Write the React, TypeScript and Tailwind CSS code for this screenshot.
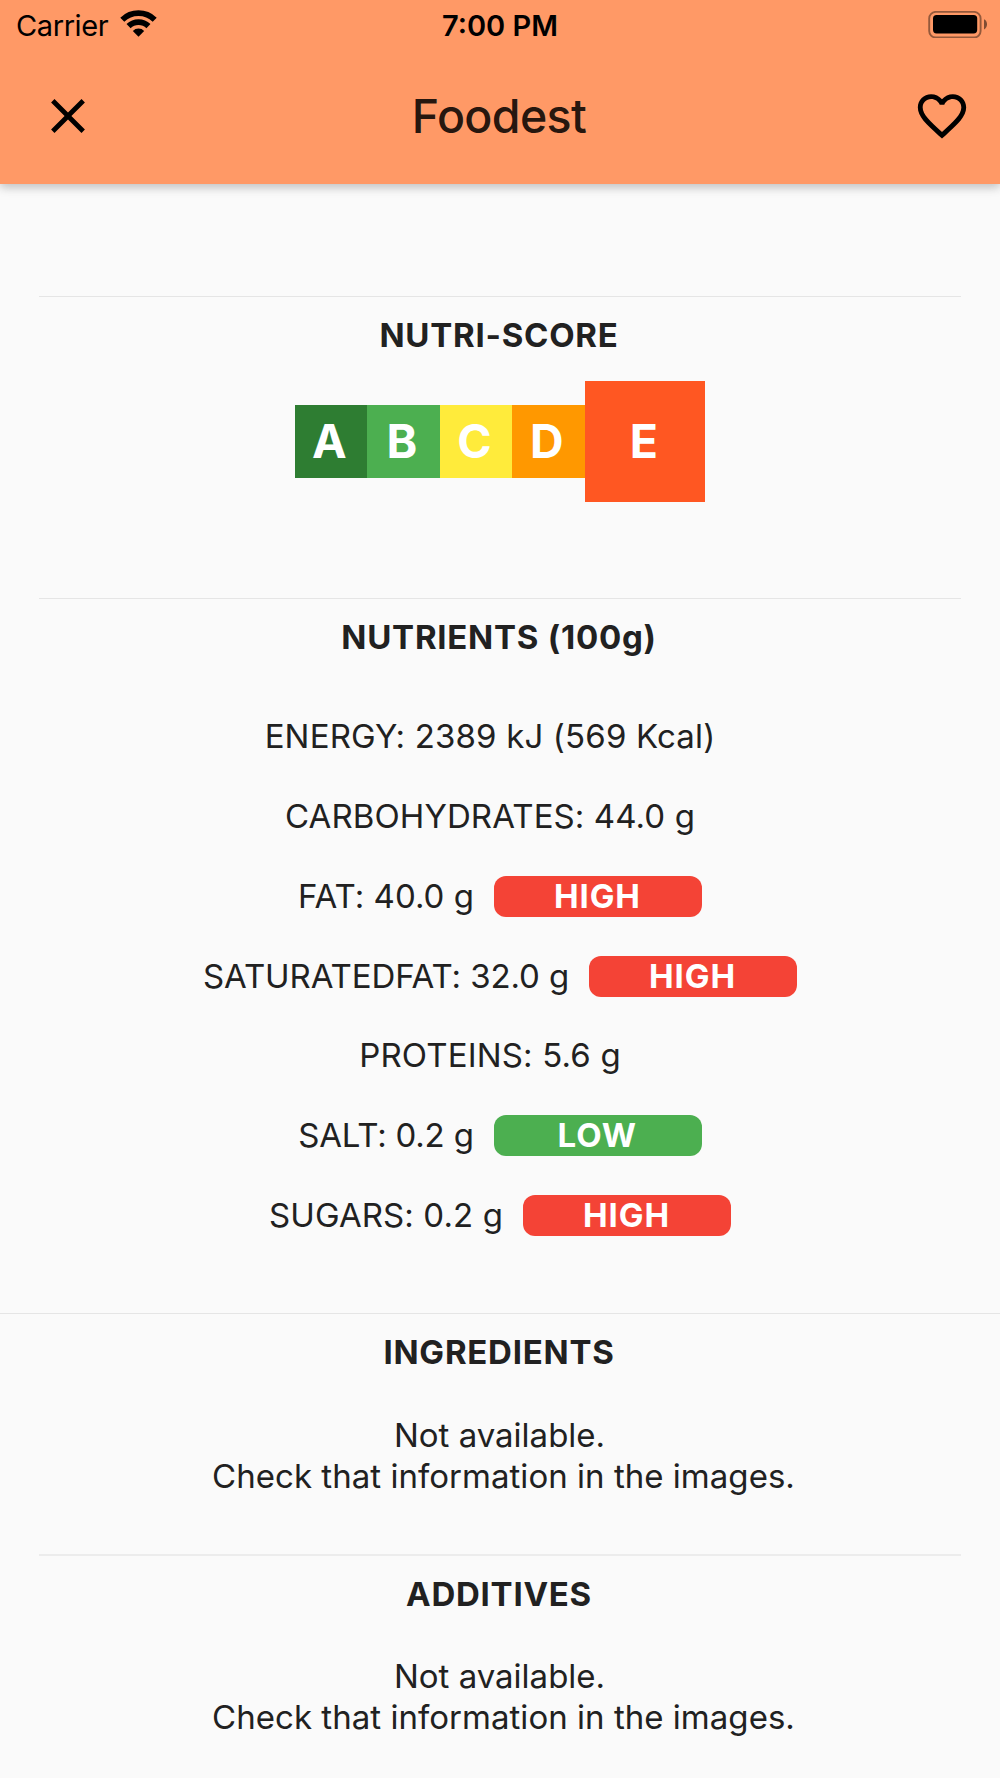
import type { ReactNode } from 'react';
import { MdClose, MdFavoriteBorder } from 'react-icons/md';

const grades = [
  { letter: 'A', color: 'bg-[#2e7d32]' },
  { letter: 'B', color: 'bg-[#4caf50]' },
  { letter: 'C', color: 'bg-[#ffeb3b]' },
  { letter: 'D', color: 'bg-[#ff9800]' },
];

type Level = 'HIGH' | 'LOW';

const nutrients: { text: string; tracking: string; level?: Level }[] = [
  { text: 'ENERGY: 2389 kJ (569 Kcal)', tracking: 'tracking-[0.16px]' },
  { text: 'CARBOHYDRATES: 44.0 g', tracking: 'tracking-[0.1px]' },
  { text: 'FAT: 40.0 g', tracking: 'tracking-[0.02px]', level: 'HIGH' },
  { text: 'SATURATEDFAT: 32.0 g', tracking: 'tracking-[-0.1px]', level: 'HIGH' },
  { text: 'PROTEINS: 5.6 g', tracking: 'tracking-[0.16px]' },
  { text: 'SALT: 0.2 g', tracking: 'tracking-[-0.2px]', level: 'LOW' },
  { text: 'SUGARS: 0.2 g', tracking: 'tracking-[0.1px]', level: 'HIGH' },
];

function WifiIcon() {
  return (
    <svg className="h-[27px] w-[37px]" viewBox="0 0 37 27" fill="none" stroke="#000">
      <path d="M2.3 9.75a23.3 23.3 0 0 1 32.4 0" strokeWidth="5.8" />
      <path d="M8.55 16.2a14.3 14.3 0 0 1 19.9 0" strokeWidth="5.8" />
      <path d="M18.5 26.7l-5.7-5.7a8 8 0 0 1 11.4 0z" fill="#000" stroke="none" />
    </svg>
  );
}

function BatteryIcon() {
  return (
    <svg className="h-[27px] w-[59px]" viewBox="0 0 59 27">
      <rect x="1.2" y="0.9" width="51.4" height="25.6" rx="6.5" fill="none" stroke="#000" strokeOpacity="0.42" strokeWidth="1.9" />
      <rect x="5" y="4" width="44.2" height="18.4" rx="3.6" fill="#000" />
      <path d="M56 8.2c4 1.6 4 8.6 0 10.2z" fill="#000" fillOpacity="0.5" />
    </svg>
  );
}

function Header() {
  return (
    <header className="relative h-[184px] bg-[#ff9966] shadow-[0_4px_8px_rgba(0,0,0,0.13),0_2px_12px_rgba(0,0,0,0.13)]">
      <div className="grid h-[50px] grid-cols-3 px-[13px] text-[29px] leading-[51px] text-black">
        <div className="flex gap-[12px] pl-[3px]">
          <span className="tracking-[-0.4px]">Carrier</span>
          <span className="pt-[10px]">
            <WifiIcon />
          </span>
        </div>
        <span className="text-center font-semibold">7:00 PM</span>
        <div className="flex justify-end pt-[11px]">
          <BatteryIcon />
        </div>
      </div>
      <div className="grid h-[134px] grid-cols-[1fr_auto_1fr] items-center pb-[2px] pl-[39px] pr-[29px]">
        <MdClose className="size-[58px] text-black" />
        <h1 className="pr-[12px] text-[46.5px] font-medium tracking-[-0.65px] text-black/87">Foodest</h1>
        <MdFavoriteBorder className="size-[58px] justify-self-end text-black" />
      </div>
    </header>
  );
}

function Section({ title, children, className }: { title: string; children: ReactNode; className: string }) {
  return (
    <section className={`pt-[18px] ${className}`}>
      <h2 className="pr-[2px] text-center font-bold tracking-[0.75px]">{title}</h2>
      {children}
    </section>
  );
}

function Unavailable({ className }: { className: string }) {
  return (
    <div className={`text-center ${className}`}>
      <p className="pr-px">Not available.</p>
      <p className="pl-[7px] tracking-[0.03px]">Check that information in the images.</p>
    </div>
  );
}

export default function App() {
  return (
    <div className="h-[1778px] w-[1000px] overflow-hidden bg-[#fafafa] font-['Inter',sans-serif] text-[33px] leading-[41px] text-[#212121]">
      <Header />
      <main className="pt-[112px]">
        <Section title="NUTRI-SCORE" className="mx-[39px] h-[302px] border-t border-[#e5e5e5]">
          <div className="mt-[25px] flex items-center justify-center text-[46.5px] font-bold text-white">
            {grades.map((g) => (
              <div key={g.letter} className={`flex size-[72.5px] items-center justify-center pr-[3px] ${g.color}`}>
                {g.letter}
              </div>
            ))}
            <div className="flex size-[120.8px] items-center justify-center bg-[#ff5722] pr-[2px]">E</div>
          </div>
        </Section>
        <Section title="NUTRIENTS (100g)" className="mx-[39px] h-[715px] border-t border-[#e5e5e5]">
          <div className="mt-[58.2px] flex flex-col gap-[38.8px]">
            {nutrients.map((n) => (
              <div key={n.text} className="flex justify-center gap-[20px]">
                <span className={n.tracking}>{n.text}</span>
                {n.level ? (
                  <span
                    className={`w-[208px] rounded-[12px] pr-px text-center font-bold tracking-[0.9px] text-white ${
                      n.level === 'HIGH' ? 'bg-[#f44336]' : 'bg-[#4caf50]'
                    }`}
                  >
                    {n.level}
                  </span>
                ) : (
                  <span />
                )}
              </div>
            ))}
          </div>
        </Section>
        <Section title="INGREDIENTS" className="h-[241px] border-t border-[#e5e5e5]">
          <Unavailable className="mt-[42px]" />
        </Section>
        <Section title="ADDITIVES" className="mx-[39px] border-t-2 border-[#ececec]">
          <Unavailable className="mt-[41px]" />
        </Section>
      </main>
    </div>
  );
}
